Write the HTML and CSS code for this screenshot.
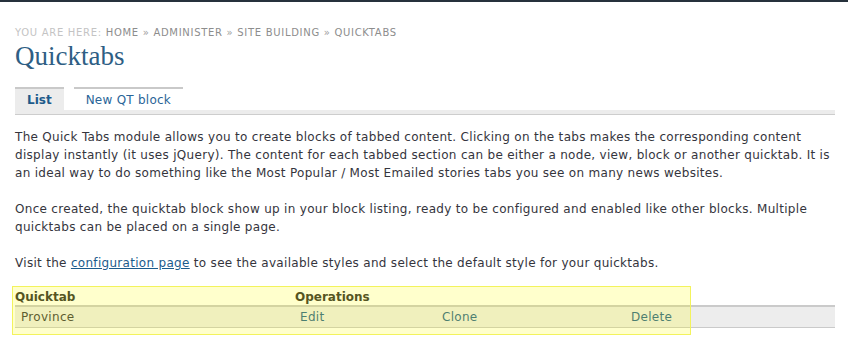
FILE: index.html
```html
<!DOCTYPE html>
<html>
<head>
<meta charset="utf-8">
<link rel="stylesheet" href="styles.css">
</head>
<body>
<div class="topbar"></div>
<div class="main">
  <div class="breadcrumb"><span class="here">You are here:</span> <a href="#">Home</a> » <a href="#">Administer</a> » <a href="#">Site building</a> » <a href="#">Quicktabs</a></div>
  <h1 class="title">Quicktabs</h1>
  <ul class="tabs">
    <li class="tab active"><a href="#">List</a></li>
    <li class="tab"><a href="#">New QT block</a></li>
  </ul>
  <div class="tabbar"></div>
  <div class="content">
    <p>The Quick Tabs module allows you to create blocks of tabbed content. Clicking on the tabs makes the corresponding content display instantly (it uses jQuery). The content for each tabbed section can be either a node, view, block or another quicktab. It is an ideal way to do something like the Most Popular / Most Emailed stories tabs you see on many news websites.</p>
    <p>Once created, the quicktab block show up in your block listing, ready to be configured and enabled like other blocks. Multiple quicktabs can be placed on a single page.</p>
    <p>Visit the <a class="link" href="#">configuration page</a> to see the available styles and select the default style for your quicktabs.</p>
    <div class="tablewrap">
      <table class="list">
        <colgroup>
          <col class="c1"><col class="c2"><col class="c3"><col class="c4">
        </colgroup>
        <thead>
          <tr><th>Quicktab</th><th colspan="3">Operations</th></tr>
        </thead>
        <tbody>
          <tr class="row"><td>Province</td><td><a href="#">Edit</a></td><td><a href="#">Clone</a></td><td><a href="#">Delete</a></td></tr>
        </tbody>
      </table>
      <div class="highlight"></div>
    </div>
  </div>
</div>
</body>
</html>
```
FILE: styles.css
```css
body {
  margin: 0;
  font-family: "DejaVu Sans", Verdana, sans-serif;
  font-size: 12px;
  color: #35353d;
  background: #fff;
}
a { text-decoration: none; color: #1f5f8e; }
.topbar { height: 2px; background: #26313c; }
.main { padding: 22px 13px 0 15px; }
.breadcrumb {
  font-size: 10px;
  line-height: 18px;
  letter-spacing: 0.7px;
  text-transform: uppercase;
  color: #a0a0a0;
}
.breadcrumb a { color: #8d8d8d; }
.breadcrumb .here { color: #c4c4c4; }
.title {
  margin: 0;
  font-family: "Liberation Serif", Georgia, serif;
  font-weight: normal;
  font-size: 27px;
  line-height: 28px;
  color: #2e5e84;
}
.tabs {
  list-style: none;
  margin: 17px 0 0;
  padding: 0;
  display: flex;
  gap: 10px;
}
.tab {
  border-top: 2px solid #c9c9c9;
  padding-top: 2px;
  line-height: 19px;
  background: #fff;
}
.tab a { display: block; padding: 0 12px; color: #2a6598; letter-spacing: 0.25px; }
.tab.active { background: #ececec; }
.tab.active a { font-weight: bold; color: #1d5a8a; letter-spacing: 0; }
.tabbar {
  height: 4px;
  background: #ececec;
  border-bottom: 1px solid #cdcdcd;
}
.content { padding-top: 13px; }
.content p { margin: 0 0 18px; line-height: 18px; letter-spacing: 0.3px; }
.link { text-decoration: underline; color: #1b5b8c; }
.tablewrap { position: relative; margin-top: -2px; padding-bottom: 7px; }
.list {
  width: 100%;
  border-collapse: collapse;
  table-layout: fixed;
}
.c1 { width: 279px; }
.c2 { width: 142px; }
.c3 { width: 189px; }
.list th {
  text-align: left;
  padding: 2px 0 0;
  line-height: 15px;
  font-weight: bold;
  color: #2b2b2b;
  border-bottom: 2px solid #cacaca;
}
.list th + th { padding-left: 1px; }
.list td {
  padding: 1px 6px;
  line-height: 18px;
  background: #ededed;
  border-bottom: 1px solid #cacaca;
  letter-spacing: 0.3px;
}
.list td a { color: #1f5f8e; }
.highlight {
  position: absolute;
  left: -3px;
  top: -2px;
  bottom: 0;
  width: 679px;
  box-sizing: border-box;
  border: 1px solid #f3f35c;
  background: rgba(255, 255, 0, 0.2);
}
```
